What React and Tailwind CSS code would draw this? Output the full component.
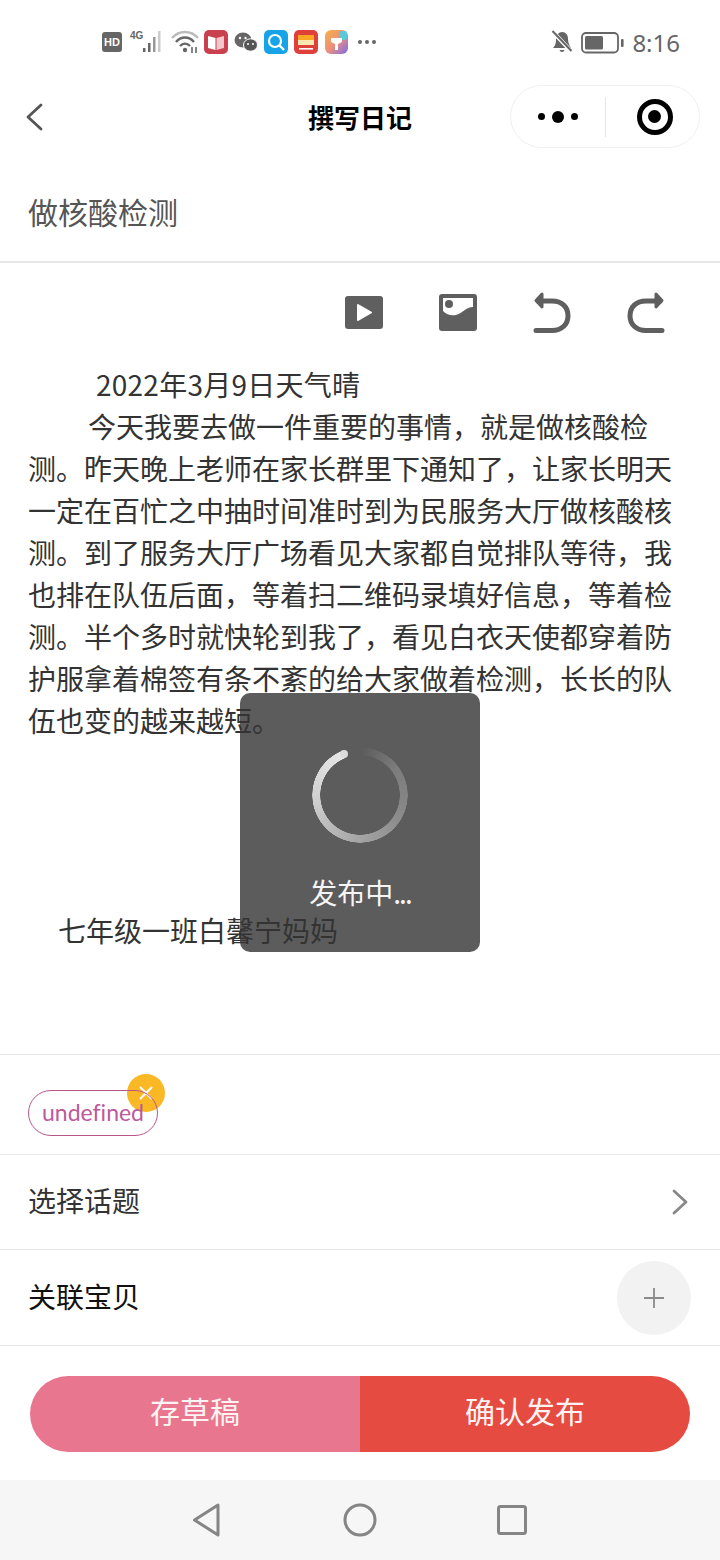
const cjk = { fontFamily: '"Noto Sans CJK SC", "Noto Sans", sans-serif' };

function Spinner() {
  return (
    <div className="relative w-[96px] h-[96px]">
      <div className="w-full h-full rounded-full bg-[conic-gradient(from_338deg,rgba(255,255,255,0)_0deg,rgba(255,255,255,0)_22deg,rgba(255,255,255,0.2)_75deg,rgba(255,255,255,0.27)_130deg,rgba(255,255,255,0.45)_205deg,rgba(255,255,255,0.72)_290deg,rgba(255,255,255,0.85)_360deg)] [mask:radial-gradient(circle,transparent_39.5px,black_40px,black_47.5px,transparent_48px)]"></div>
      <span className="absolute left-[27.5px] top-[3px] w-[8px] h-[8px] rounded-full bg-[#dcdcdc]"></span>
    </div>
  );
}

function StatusBar() {
  return (
    <div className="flex h-[85px] pt-[30px] pl-[102px] pr-[40px] items-start justify-between">
      <div className="flex items-start">
        <div className="w-[20px] h-[20px] mt-[2px] rounded-[3px] bg-[#666] text-white text-[11px] font-bold flex items-center justify-center" style={{ fontFamily: '"Liberation Sans", sans-serif' }}>HD</div>
        <svg width="44" height="24" viewBox="0 0 44 24" className="ml-[8px]">
          <text x="0" y="9" fontSize="10" fontWeight="700" fill="#666" fontFamily="Liberation Sans, sans-serif">4G</text>
          <rect x="13" y="18" width="2.5" height="4" fill="#666" />
          <rect x="18" y="13" width="2.5" height="9" fill="#666" />
          <rect x="23" y="7" width="2.5" height="15" fill="#999" />
          <rect x="28" y="1" width="2.5" height="21" fill="#ccc" />
        </svg>
        <svg width="28" height="24" viewBox="0 0 28 24" className="ml-[-3px]">
          <path d="M1 8 C8 0 20 0 27 8" fill="none" stroke="#bbb" strokeWidth="2.4" />
          <path d="M5 12 C10 6 18 6 23 12" fill="none" stroke="#666" strokeWidth="2.4" />
          <path d="M9 16 C12 13 16 13 19 16" fill="none" stroke="#666" strokeWidth="2.4" />
          <circle cx="14" cy="20" r="2.2" fill="#666" />
          <path d="M21 17 v6 M25 17 v6" stroke="#666" strokeWidth="1.6" />
        </svg>
        <svg width="24" height="24" viewBox="0 0 24 24" className="ml-[5px]">
          <rect width="24" height="24" rx="5" fill="#c9414f" />
          <path d="M4 6 L11.5 8 V20 L4 18 Z" fill="#fff" />
          <path d="M20 6 L12.5 8 V20 L20 18 Z" fill="#f3c6cb" />
        </svg>
        <svg width="24" height="22" viewBox="0 0 24 22" className="ml-[6px] mt-[1px]">
          <ellipse cx="9" cy="9" rx="8.5" ry="7.5" fill="#666" />
          <ellipse cx="16.5" cy="14" rx="7" ry="6.2" fill="#555" stroke="#fff" strokeWidth="1" />
          <circle cx="6" cy="7" r="1.2" fill="#fff" />
          <circle cx="11.5" cy="7" r="1.2" fill="#fff" />
          <circle cx="14" cy="13" r="1" fill="#fff" />
          <circle cx="19" cy="13" r="1" fill="#fff" />
        </svg>
        <svg width="24" height="24" viewBox="0 0 24 24" className="ml-[6px]">
          <rect width="24" height="24" rx="5" fill="#17a3e8" />
          <circle cx="11" cy="11" r="6" fill="none" stroke="#fff" strokeWidth="2.2" />
          <path d="M15.5 15.5 L20 20" stroke="#fff" strokeWidth="2.4" />
        </svg>
        <svg width="24" height="24" viewBox="0 0 24 24" className="ml-[6px]">
          <rect width="24" height="24" rx="5" fill="#e0403a" />
          <rect x="4" y="5" width="16" height="5" fill="#f9a825" />
          <rect x="4" y="10" width="16" height="5" fill="#fde7b0" />
          <rect x="5" y="18" width="14" height="1.6" fill="#fff" />
        </svg>
        <svg width="23" height="24" viewBox="0 0 23 24" className="ml-[7px]">
          <defs>
            <linearGradient id="appg" x1="0" y1="0" x2="1" y2="1">
              <stop offset="0" stopColor="#f5b342" />
              <stop offset="0.5" stopColor="#ee8f7a" />
              <stop offset="1" stopColor="#7b6cf0" />
            </linearGradient>
          </defs>
          <rect width="23" height="24" rx="6" fill="url(#appg)" />
          <rect x="14" y="1" width="8" height="9" rx="2" fill="#5cc8d8" />
          <path d="M6 8 H17 V12 L13 14 V20 H10 V14 L6 12 Z" fill="#fff" />
        </svg>
        <div className="ml-[10px] mt-[10px] flex gap-[3.5px]">
          <span className="w-[3.5px] h-[3.5px] rounded-full bg-[#666]"></span>
          <span className="w-[3.5px] h-[3.5px] rounded-full bg-[#666]"></span>
          <span className="w-[3.5px] h-[3.5px] rounded-full bg-[#666]"></span>
        </div>
      </div>
      <div className="flex items-start">
        <svg width="22" height="24" viewBox="0 0 22 24">
          <path d="M2 18 C5 15 5 12 5 9 C5 5 8 2 11 2 C15 2 17 5 17 9 C17 12 18 15 20 18 Z" fill="#666" />
          <path d="M8.5 20 a2.6 2.6 0 0 0 5 0 Z" fill="#666" />
          <path d="M2 2 L21 22" stroke="#fff" strokeWidth="4" />
          <path d="M1.5 1 L20.5 21" stroke="#666" strokeWidth="2" />
        </svg>
        <svg width="43" height="22" viewBox="0 0 43 22" className="ml-[8px] mt-[2px]">
          <rect x="1" y="1" width="36" height="19.5" rx="4" fill="none" stroke="#666" strokeWidth="1.8" />
          <rect x="4" y="4" width="18" height="13.5" rx="1.5" fill="#666" />
          <rect x="40" y="7" width="2.6" height="8" rx="1" fill="#666" />
        </svg>
        <span className="ml-[8px] text-[24px] leading-[24px] mt-[1px] text-[#666]" style={{ fontFamily: '"Noto Sans", sans-serif' }}>8:16</span>
      </div>
    </div>
  );
}

function Toolbar() {
  return (
    <div className="h-[100px] flex items-center justify-end gap-[56px] pr-[55px]">
      <svg width="38" height="38" viewBox="0 0 38 38">
        <rect x="0" y="2" width="38" height="33" rx="3" fill="#5f5f5f" />
        <path d="M13 11 L26 18.5 L13 26 Z" fill="#fff" stroke="#fff" strokeWidth="2" strokeLinejoin="round" />
      </svg>
      <svg width="38" height="38" viewBox="0 0 38 38">
        <rect x="0" y="0" width="38" height="37" rx="3" fill="#5f5f5f" />
        <path d="M4 4 H34 V13 C27 13 24 19 17 21 C12 22 8 21 4 17 Z" fill="#fff" />
        <circle cx="10" cy="10" r="4" fill="#5f5f5f" />
      </svg>
      <svg width="38" height="42" viewBox="0 0 38 42" fill="none" stroke="#5f5f5f" strokeWidth="5" strokeLinecap="round" strokeLinejoin="round">
        <path d="M3 38.5 H19 C29 38.5 35 32 35 24 C35 15 29 9 19 9 H5" />
        <path d="M9 2 L3 8.5 L9 15 Z" fill="#5f5f5f" strokeWidth="3" />
      </svg>
      <svg width="38" height="42" viewBox="0 0 38 42" fill="none" stroke="#5f5f5f" strokeWidth="5" strokeLinecap="round" strokeLinejoin="round">
        <path d="M35 38.5 H19 C9 38.5 3 32 3 24 C3 15 9 9 19 9 H33" />
        <path d="M29 2 L35 8.5 L29 15 Z" fill="#5f5f5f" strokeWidth="3" />
      </svg>
    </div>
  );
}

export default function App() {
  return (
    <div className="relative w-[720px] h-[1560px] bg-white flex flex-col overflow-hidden" style={cjk}>
      <StatusBar />
      <div className="h-[63px] grid grid-cols-[1fr_auto_1fr] items-center">
        <div className="pl-[26px]">
          <svg width="18" height="28" viewBox="0 0 18 28" fill="none" stroke="#555" strokeWidth="2.8" strokeLinecap="round" strokeLinejoin="round">
            <path d="M15 2 L2 14 L15 26" />
          </svg>
        </div>
        <div className="text-[26px] font-bold text-black">撰写日记</div>
        <div className="flex justify-end pr-[20px]">
          <div className="w-[190px] h-[63px] rounded-full border border-[#f0f0f0] flex items-center">
            <div className="w-[94px] flex items-center justify-end gap-[7px] pr-[27px]">
              <span className="w-[7px] h-[7px] rounded-full bg-black"></span>
              <span className="w-[12px] h-[12px] rounded-full bg-black"></span>
              <span className="w-[7px] h-[7px] rounded-full bg-black"></span>
            </div>
            <div className="w-px h-[40px] bg-[#e5e5e5]"></div>
            <div className="flex-1 flex justify-center pl-[4px]">
              <div className="w-[36px] h-[36px] rounded-full border-[5px] border-black flex items-center justify-center">
                <span className="w-[13px] h-[13px] rounded-full bg-black"></span>
              </div>
            </div>
          </div>
        </div>
      </div>
      <div className="h-[115px] pt-[14px] pl-[28px] flex items-center text-[30px] text-[#555] border-b-2 border-[#e6e6e6]">做核酸检测</div>
      <Toolbar />
      <div className="h-[691px] px-[28px] text-[28px] leading-[42px] text-[#333]">
        <p className="pl-[68px] tracking-[0.25px]">2022年3月9日天气晴</p>
        <p className="indent-[60px]">今天我要去做一件重要的事情，就是做核酸检测。昨天晚上老师在家长群里下通知了，让家长明天一定在百忙之中抽时间准时到为民服务大厅做核酸核测。到了服务大厅广场看见大家都自觉排队等待，我也排在队伍后面，等着扫二维码录填好信息，等着检测。半个多时就快轮到我了，看见白衣天使都穿着防护服拿着棉签有条不紊的给大家做着检测，长长的队伍也变的越来越短。</p>
        <p className="pl-[30px] mt-[168px]">七年级一班白馨宁妈妈</p>
      </div>
      <div className="h-[100px] border-t border-[#e8e8e8] pl-[28px] pt-[35px]">
        <div className="relative w-[130px] h-[47px]">
          <div className="absolute left-[99px] top-[-16px] w-[38px] h-[38px] rounded-full bg-[#fbb825] flex items-center justify-center">
            <svg width="16" height="16" viewBox="0 0 16 16" stroke="#fff" strokeWidth="2">
              <path d="M2 2 L14 14 M14 2 L2 14" />
            </svg>
          </div>
          <div className="relative w-[130px] h-[46px] pb-[2px] rounded-full border border-[#b8568c] flex items-center justify-center text-[23px] text-[#bb5a9c] [font-variant-ligatures:none]" style={{ fontFamily: 'Lato, sans-serif' }}>undefined</div>
        </div>
      </div>
      <div className="h-[95px] border-t border-[#e8e8e8] px-[28px] flex items-center justify-between text-[28px] text-[#333]">
        <span className="mb-[4px]">选择话题</span>
        <svg width="18" height="26" viewBox="0 0 18 26" fill="none" stroke="#888" strokeWidth="2.8" strokeLinecap="round" strokeLinejoin="round" className="mr-[3px]">
          <path d="M3 2 L15 13 L3 24" />
        </svg>
      </div>
      <div className="h-[96px] border-t border-[#e8e8e8] pl-[28px] pr-[29px] flex items-center justify-between text-[28px] text-[#111]">
        <span className="mb-[4px]">关联宝贝</span>
        <div className="w-[74px] h-[74px] rounded-full bg-[#f2f2f2] flex items-center justify-center">
          <svg width="22" height="22" viewBox="0 0 22 22" stroke="#8a8a8a" strokeWidth="1.8">
            <path d="M11 1 V21 M1 11 H21" />
          </svg>
        </div>
      </div>
      <div className="h-[135px] border-t border-[#e8e8e8] px-[30px] pt-[30px]">
        <div className="h-[76px] rounded-full overflow-hidden flex text-[30px] text-[#fdf3f3]">
          <div className="flex-1 bg-[#e8768f] pb-[8px] flex items-center justify-center">存草稿</div>
          <div className="flex-1 bg-[#e54b41] pb-[8px] flex items-center justify-center">确认发布</div>
        </div>
      </div>
      <div className="flex-1 bg-[#f6f6f6] flex items-center justify-center gap-[120px]">
        <svg width="30" height="34" viewBox="0 0 30 34" fill="none" stroke="#858585" strokeWidth="3" strokeLinejoin="round">
          <path d="M25 2 V32 L1.5 17 Z" />
        </svg>
        <svg width="34" height="34" viewBox="0 0 34 34" fill="none" stroke="#858585" strokeWidth="3">
          <circle cx="17" cy="17" r="15" />
        </svg>
        <svg width="30" height="30" viewBox="0 0 30 30" fill="none" stroke="#858585" strokeWidth="3">
          <rect x="1.5" y="1.5" width="27" height="27" rx="2" />
        </svg>
      </div>
      <div className="absolute left-[240px] top-[693px] w-[240px] h-[259px] rounded-[10px] bg-[#333]/80 flex flex-col items-center text-white">
        <div className="mt-[54px]"><Spinner /></div>
        <div className="mt-[29px] text-[28px] leading-[40px] text-[#f5f5f5]">发布中<span className="tracking-[-2px]">...</span></div>
      </div>
    </div>
  );
}
